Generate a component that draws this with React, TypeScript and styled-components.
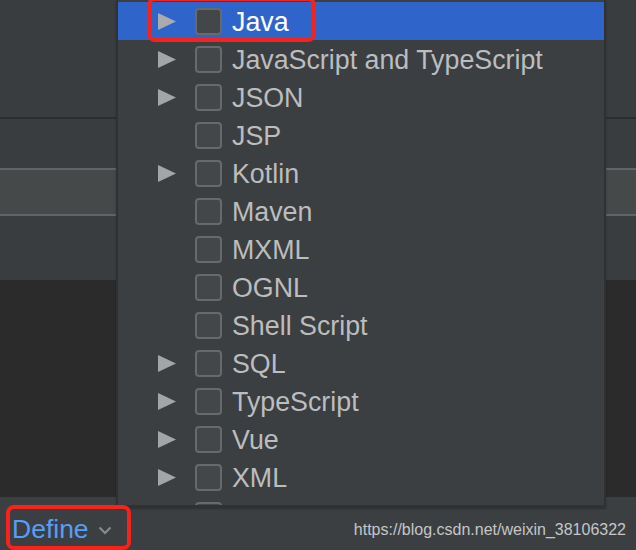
import React from "react";
import styled, {createGlobalStyle} from "styled-components";

type Lang = {
    name: string;
    expandable: boolean;
};

const languages: Lang[] = [
    {name: "Java", expandable: true},
    {name: "JavaScript and TypeScript", expandable: true},
    {name: "JSON", expandable: true},
    {name: "JSP", expandable: false},
    {name: "Kotlin", expandable: true},
    {name: "Maven", expandable: false},
    {name: "MXML", expandable: false},
    {name: "OGNL", expandable: false},
    {name: "Shell Script", expandable: false},
    {name: "SQL", expandable: true},
    {name: "TypeScript", expandable: true},
    {name: "Vue", expandable: true},
    {name: "XML", expandable: true},
    {name: "", expandable: false},
];

const Arrow = () => (
    <svg width="18" height="17" viewBox="0 0 18 17">
        <polygon points="0,0 18,8.5 0,17" fill="currentColor"/>
    </svg>
);

const Chevron = () => (
    <svg width="14" height="9" viewBox="0 0 14 9">
        <polyline points="1.5,1.5 7,7 12.5,1.5" fill="none" stroke="currentColor" strokeWidth="2"/>
    </svg>
);

const App = () => {
    return (
        <>
            <GlobalStyle/>
            <Screen>
                <TopPanel/>
                <DarkLine/>
                <Band/>
                <LightLine/>
                <Band $light $height={44}/>
                <LightLine/>
                <Band $height={64}/>
                <EditorArea/>
                <BottomBar>
                    <DefineButton>
                        Define
                        <ChevronWrap><Chevron/></ChevronWrap>
                    </DefineButton>
                    <Watermark>https://blog.csdn.net/weixin_38106322</Watermark>
                </BottomBar>

                <Popup>
                    {languages.map((lang, i) => (
                        <LangRow key={i} $selected={i === 0}>
                            <ArrowSlot $selected={i === 0}>
                                {lang.expandable && <Arrow/>}
                            </ArrowSlot>
                            <CheckBox/>
                            <LangName $selected={i === 0}>{lang.name}</LangName>
                        </LangRow>
                    ))}
                </Popup>

                <Highlight $left={147} $top={-3} $width={169} $height={45}/>
                <Highlight $left={6} $top={505} $width={125} $height={45}/>
            </Screen>
        </>
    );
};

export default App;


const GlobalStyle = createGlobalStyle`
  html, body {
    margin: 0;
    padding: 0;
    background: #2b2b2b;
  }

  body {
    font-family: "Liberation Sans", Arial, Helvetica, sans-serif;
  }
`

const Screen = styled.div`
  position: relative;
  width: 636px;
  height: 550px;
  overflow: hidden;
  display: flex;
  flex-direction: column;
  background: #2b2b2b;
`

const TopPanel = styled.div`
  height: 117px;
  background: #3a3d3f;
`

const DarkLine = styled.div`
  height: 2px;
  background: #2d2e30;
`

const LightLine = styled.div`
  height: 2px;
  background: #616365;
`

const Band = styled.div<{ $light?: boolean; $height?: number }>`
  height: ${p => p.$height ?? 49}px;
  background: ${p => p.$light ? "#45494a" : "#3a3d3f"};
`

const EditorArea = styled.div`
  flex: 1;
  background: #2b2b2b;
`

const BottomBar = styled.div`
  height: 53px;
  background: #3c3f41;
  display: flex;
  align-items: center;
  justify-content: space-between;
  padding: 10px 10px 0 12px;
  box-sizing: border-box;
`

const DefineButton = styled.div`
  display: flex;
  align-items: center;
  gap: 9px;
  color: #589df6;
  font-size: 26.5px;
  line-height: 30px;
`

const ChevronWrap = styled.span`
  display: flex;
  color: #8a8c8e;
  margin-top: 3px;
`

const Watermark = styled.div`
  color: #c4c6c8;
  font-size: 16px;
  margin-top: 2px;
`

const Popup = styled.div`
  position: absolute;
  left: 116px;
  top: 0;
  width: 486px;
  height: 503px;
  padding-top: 2px;
  box-sizing: content-box;
  background: #3c3f41;
  border: 2px solid #2f3133;
  border-top: none;
  box-shadow: 0 2px 2px rgba(0, 0, 0, 0.25);
  overflow: hidden;
`

const LangRow = styled.div<{ $selected: boolean }>`
  height: 38px;
  display: flex;
  align-items: center;
  padding-left: 40px;
  background: ${p => p.$selected ? "#2f65ca" : "transparent"};
`

const ArrowSlot = styled.span<{ $selected: boolean }>`
  width: 18px;
  height: 17px;
  display: flex;
  color: ${p => p.$selected ? "#a9abad" : "#a3a5a7"};
  margin-right: 19px;
`

const CheckBox = styled.span`
  width: 23px;
  height: 23px;
  border: 2px solid #67696b;
  border-radius: 4px;
  background: #43474a;
  margin-right: 10px;
  flex-shrink: 0;
`

const LangName = styled.span<{ $selected: boolean }>`
  font-size: 26.8px;
  line-height: 38px;
  padding-top: 2px;
  color: ${p => p.$selected ? "#ffffff" : "#bbbdbf"};
  white-space: nowrap;
`

const Highlight = styled.div<{ $left: number; $top: number; $width: number; $height: number }>`
  position: absolute;
  left: ${p => p.$left}px;
  top: ${p => p.$top}px;
  width: ${p => p.$width}px;
  height: ${p => p.$height}px;
  border: 4px solid #f5231b;
  border-radius: 8px;
  box-sizing: border-box;
`
